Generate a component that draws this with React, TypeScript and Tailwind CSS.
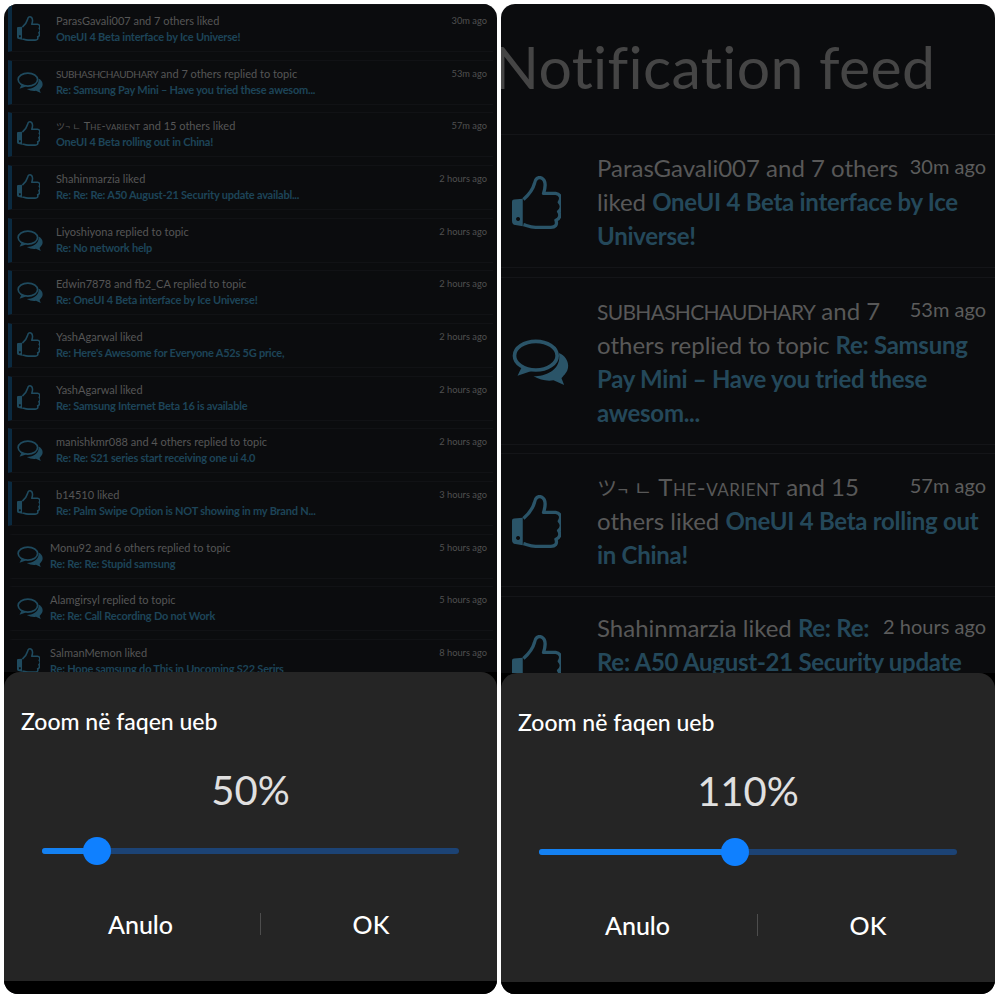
const smallRows = [
  { icon: 'like', name: 'ParasGavali007 and 7 others liked', topic: 'OneUI 4 Beta interface by Ice Universe!', time: '30m ago', bar: true },
  { icon: 'chat', name: <><span className="text-[10px] leading-none tracking-[-0.45px]">SUBHASHCHAUDHARY</span> and 7 others replied to topic</>, topic: 'Re: Samsung Pay Mini – Have you tried these awesom...', time: '53m ago', bar: true },
  { icon: 'like', name: <><span className="text-[9px] leading-none">ツ¬ ㄴ</span> <span className="tracking-[0.2px] [font-variant-caps:small-caps]">The-varient</span> and 15 others liked</>, topic: 'OneUI 4 Beta rolling out in China!', time: '57m ago', bar: true },
  { icon: 'like', name: 'Shahinmarzia liked', topic: 'Re: Re: Re: A50 August-21 Security update availabl...', time: '2 hours ago', bar: true },
  { icon: 'chat', name: 'Liyoshiyona replied to topic', topic: 'Re: No network help', time: '2 hours ago', bar: true },
  { icon: 'chat', name: 'Edwin7878 and fb2_CA replied to topic', topic: 'Re: OneUI 4 Beta interface by Ice Universe!', time: '2 hours ago', bar: true },
  { icon: 'like', name: 'YashAgarwal liked', topic: "Re: Here's Awesome for Everyone A52s 5G price,", time: '2 hours ago', bar: true },
  { icon: 'like', name: 'YashAgarwal liked', topic: 'Re: Samsung Internet Beta 16 is available', time: '2 hours ago', bar: true },
  { icon: 'chat', name: 'manishkmr088 and 4 others replied to topic', topic: 'Re: Re: S21 series start receiving one ui 4.0', time: '2 hours ago', bar: true },
  { icon: 'like', name: 'b14510 liked', topic: 'Re: Palm Swipe Option is NOT showing in my Brand N...', time: '3 hours ago', bar: true },
  { icon: 'chat', name: 'Monu92 and 6 others replied to topic', topic: 'Re: Re: Re: Stupid samsung', time: '5 hours ago', bar: false },
  { icon: 'chat', name: 'Alamgirsyl replied to topic', topic: 'Re: Re: Call Recording Do not Work', time: '5 hours ago', bar: false },
  { icon: 'like', name: 'SalmanMemon liked', topic: 'Re: Hope samsung do This in Upcoming S22 Serirs', time: '8 hours ago', bar: false },
]

const topic = 'font-bold tracking-[-0.28px] text-[#24485a]'

const bigRows = [
  {
    icon: 'like',
    time: '30m ago',
    lines: [
      <>ParasGavali007 and 7 others</>,
      <>liked <b className={topic}>OneUI 4 Beta interface by Ice</b></>,
      <b className={topic}>Universe!</b>,
    ],
  },
  {
    icon: 'chat',
    time: '53m ago',
    lines: [
      <><span className="text-[21px] leading-none tracking-[-0.7px]">SUBHASHCHAUDHARY</span> and 7</>,
      <>others replied to topic <b className={topic}>Re: Samsung</b></>,
      <b className={topic}>Pay Mini – Have you tried these</b>,
      <b className={topic}>awesom...</b>,
    ],
  },
  {
    icon: 'like',
    time: '57m ago',
    lines: [
      <><span className="text-[20px] leading-none">ツ¬ ㄴ</span> <span className="tracking-[0.5px] [font-variant-caps:small-caps]">The-varient</span> and 15</>,
      <>others liked <b className={topic}>OneUI 4 Beta rolling out</b></>,
      <b className={topic}>in China!</b>,
    ],
  },
  {
    icon: 'like',
    time: '2 hours ago',
    lines: [
      <>Shahinmarzia liked <b className={topic}>Re: Re:</b></>,
      <b className={topic}>Re: A50 August-21 Security update</b>,
    ],
  },
]

function ThumbIcon({ className }: { className: string }) {
  return (
    <svg viewBox="0 0 146 158" className={className} fill="none">
      <path fillRule="evenodd" fill="currentColor" d="M0 76 Q0 70 6 70 L32 68 L32 150 L10 146 Q0 145 0 134 Z M18 122 a6 6 0 1 0 0.1 0 Z" />
      <path
        stroke="currentColor"
        strokeWidth="10"
        strokeLinejoin="round"
        d="M34 70 C50 56 62 42 67 22 C69 8 78 2 88 6 C100 12 101 30 94 52 L130 52 C146 54 148 68 141 78 C150 86 148 100 139 106 C146 116 142 128 131 132 C136 146 128 153 116 153 L70 153 C55 153 45 148 34 145"
      />
    </svg>
  )
}

function ChatIcon({ className }: { className: string }) {
  return (
    <svg viewBox="0 0 170 138" className={className} fill="none">
      <path fill="currentColor" d="M140 42 C165 52 173 76 165 95 C158 108 150 113 148 118 L156 138 L124 124 C104 128 82 122 64 112 C104 112 150 90 140 42 Z" />
      <ellipse cx="71" cy="50" rx="64" ry="43" stroke="currentColor" strokeWidth="11" />
      <path fill="currentColor" d="M30 82 L16 110 L58 96 Z" />
    </svg>
  )
}

function SmallRow({ row }: { row: (typeof smallRows)[number] }) {
  return (
    <div className={`flex h-[45px] border-y border-l-4 border-y-[#111215] first:h-[48px] first:pt-[3px] ${row.bar ? 'border-l-[#0b2a40]' : 'border-l-transparent'}`}>
      <div className={`shrink-0 pl-[5px] pt-[8px] text-[#1f4a5e] ${row.bar ? 'w-[44px]' : 'w-[38px]'}`}>
        {row.icon === 'like' ? <ThumbIcon className="h-[25px] w-[23px]" /> : <ChatIcon className="mt-[3px] h-[21px] w-[26px]" />}
      </div>
      <div className="min-w-0 flex-1 pt-[5px]">
        <div className="text-[11px] leading-[15px] whitespace-nowrap text-[#565656]">{row.name}</div>
        <div className="mt-[1px] text-[11px] leading-[15px] font-bold tracking-[-0.22px] whitespace-nowrap text-[#1d4458]">{row.topic}</div>
      </div>
      <div className="shrink-0 pt-[6px] pr-[6px] text-[9.3px] leading-[13px] text-[#505050]">{row.time}</div>
    </div>
  )
}

function BigRow({ row }: { row: (typeof bigRows)[number] }) {
  return (
    <div className="flex shrink-0 items-center border-y border-[#141518] pt-[16px] pb-[14px] pr-[9px] last:pt-[14px]">
      <div className="w-[96px] shrink-0 pl-[11px] text-[#2a5468]">
        {row.icon === 'like' ? <ThumbIcon className="h-[53px] w-[49px]" /> : <ChatIcon className="h-[46px] w-[57px]" />}
      </div>
      <div className="min-h-[102px] min-w-0 flex-1 text-[24px] leading-[34px] text-[#585858]">
        <span className="float-right text-[20px] leading-[30px] text-[#5c5c5c]">{row.time}</span>
        {row.lines.map((line, i) => (
          <div key={i} className="whitespace-nowrap">{line}</div>
        ))}
      </div>
    </div>
  )
}

function ZoomDialog({ value, percent, strip }: { value: string; percent: number; strip: string }) {
  return (
    <div className="absolute inset-x-0 bottom-0 bg-black">
      <div className="h-[309px] rounded-t-[16px] bg-[#252525] px-[17px] pt-[34px]">
        <div className="text-[23px] leading-[30px] font-medium text-white">Zoom në faqen ueb</div>
        <div className="mt-[29px] text-center text-[40px] leading-[50px] text-[#e0e0e0]">{value}</div>
        <div className="relative mx-[21px] mt-[33px] h-[6px] rounded-full bg-[#1c4375]">
          <div className="h-full rounded-full bg-[#1481f2]" style={{ width: `${percent}%` }} />
          <div className="absolute top-[-11px] ml-[-14px] h-[28px] w-[28px] rounded-full bg-[#0f80ff]" style={{ left: `${percent}%` }} />
        </div>
        <div className="mt-[50px] grid grid-cols-[239px_1px_220px] items-center text-[25px] leading-[40px] font-medium text-white">
          <div className="text-center">Anulo</div>
          <div className="h-[22px] bg-[#4d4d4d]" />
          <div className="text-center">OK</div>
        </div>
      </div>
      <div className={strip} />
    </div>
  )
}

export default function App() {
  return (
    <div className="flex h-[999px] w-[999px] gap-[4px] bg-white p-[4px] pb-[5px] font-['Lato','Noto_Sans_CJK_JP',sans-serif]">
      <div className="relative w-[493px] overflow-hidden rounded-[14px] bg-[#0b0c0e]">
        <div className="flex flex-col gap-[7.67px] px-[4px]">
          {smallRows.map((row, i) => (
            <SmallRow key={i} row={row} />
          ))}
        </div>
        <ZoomDialog value="50%" percent={13.2} strip="h-[13px]" />
      </div>

      <div className="relative w-[494px] overflow-hidden rounded-[14px] bg-[#0b0c0e]">
        <div className="h-[130px] pt-[28px] text-[59px] leading-[70px] tracking-[0.3px] whitespace-nowrap text-[#454545] [font-variant-ligatures:none]">
          <div className="ml-[-7px]">Notification feed</div>
        </div>
        <div className="flex flex-col gap-[8.5px]">
          {bigRows.map((row, i) => (
            <BigRow key={i} row={row} />
          ))}
        </div>
        <ZoomDialog value="110%" percent={46.8} strip="h-[12px]" />
      </div>
    </div>
  )
}
